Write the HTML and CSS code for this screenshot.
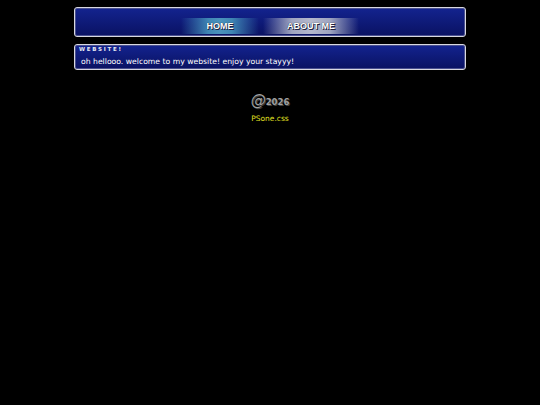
FILE: index.html
```html
<!DOCTYPE html>
<html>
<head>
<meta charset="utf-8">
<link rel="stylesheet" href="styles.css">
</head>
<body>
<div class="page">
  <header class="box header">
    <nav class="nav">
      <a class="btn btn-home" href="#">HOME</a>
      <a class="btn btn-about" href="#">ABOUT ME</a>
    </nav>
  </header>
  <section class="box panel">
    <div class="label">WEBSITE!</div>
    <p class="msg">oh hellooo. welcome to my website! enjoy your stayyy!</p>
  </section>
  <footer class="footer">
    <div class="copy"><span class="at">@</span><span class="year">2026</span></div>
    <div class="credit">PSone.css</div>
  </footer>
</div>
</body>
</html>
```
FILE: styles.css
```css
html, body {
  margin: 0;
  padding: 0;
  background: #000;
}
.page {
  width: 392px;
  margin: 7px auto 0;
  display: flex;
  flex-direction: column;
  gap: 7px;
}
.box {
  box-sizing: border-box;
  border: 1px solid #d8d8e0;
  border-radius: 3px;
  background: linear-gradient(to bottom, #13238f, #0a1262);
  box-shadow: inset 0 0 0 1px #4a5090;
}
.header {
  height: 30px;
  padding-top: 10px;
}
.nav {
  display: flex;
  justify-content: center;
  gap: 4px;
}
.btn {
  display: flex;
  align-items: center;
  justify-content: center;
  height: 16px;
  font-family: "Liberation Sans", Arial, sans-serif;
  font-weight: bold;
  font-size: 9px;
  color: #fff;
  text-decoration: none;
  text-shadow: 1px 1px 0 #202040, 0 0 1px #000;
}
.btn-home {
  width: 78px;
  background: linear-gradient(to right, rgba(60,140,190,0), #3f86b4 35%, #4a92bc 50%, #3f86b4 65%, rgba(60,140,190,0));
}
.btn-about {
  width: 96px;
  background: linear-gradient(to right, rgba(170,175,200,0), #9ea4c0 30%, #b4b8cc 50%, #9ea4c0 70%, rgba(170,175,200,0));
}
.panel {
  height: 26px;
  padding: 1px 6px 0 4px;
}
.label {
  font-family: "DejaVu Sans", Verdana, sans-serif;
  font-size: 5.5px;
  font-weight: bold;
  letter-spacing: 1.7px;
  color: #e8e8f0;
  line-height: 6px;
}
.msg {
  margin: 5px 0 0 2px;
  font-family: "DejaVu Sans", Verdana, sans-serif;
  font-size: 7.7px;
  color: #fff;
  line-height: 10px;
}
.footer {
  margin-top: 15px;
  display: flex;
  flex-direction: column;
  align-items: center;
  gap: 6px;
}
.copy {
  display: flex;
  align-items: baseline;
  color: #a0a0a0;
  text-shadow: 1px 1px 0 #404040;
  font-family: "DejaVu Sans", Verdana, sans-serif;
}
.at {
  font-size: 15px;
  font-style: italic;
  line-height: 16px;
}
.year {
  font-size: 8.5px;
  font-weight: bold;
}
.credit {
  font-family: "DejaVu Sans", Verdana, sans-serif;
  font-size: 7.5px;
  color: #e0e020;
}
```
